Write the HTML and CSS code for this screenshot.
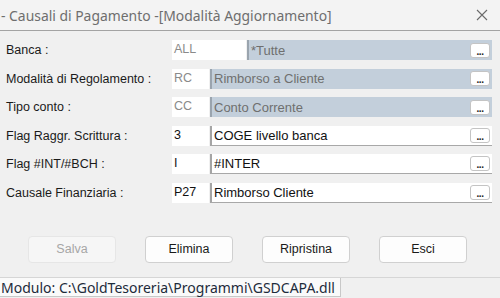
FILE: index.html
```html
<!DOCTYPE html>
<html lang="it">
<head>
  <meta charset="UTF-8" />
  <title>Causali di Pagamento</title>
  <link rel="stylesheet" href="styles.css">
</head>
<body>
  <div class="window">
    <div class="titlebar">
      <span class="title">- Causali di Pagamento -[Modalità Aggiornamento]</span>
      <svg class="close" width="12" height="12" viewBox="0 0 12 12">
        <path d="M1 1 L11 11 M11 1 L1 11" stroke="#6a6a6a" stroke-width="1.1" fill="none"/>
      </svg>
    </div>

    <div class="form">
      <div class="row">
        <label>Banca :</label>
        <div class="code wide off">ALL</div>
        <div class="desc off">*Tutte<span class="dots">...</span></div>
      </div>
      <div class="row">
        <label>Modalità di Regolamento :</label>
        <div class="code off">RC</div>
        <div class="desc off">Rimborso a Cliente<span class="dots">...</span></div>
      </div>
      <div class="row">
        <label>Tipo conto :</label>
        <div class="code off">CC</div>
        <div class="desc off">Conto Corrente<span class="dots">...</span></div>
      </div>
      <div class="row">
        <label>Flag Raggr. Scrittura :</label>
        <div class="code">3</div>
        <div class="desc">COGE livello banca<span class="dots">...</span></div>
      </div>
      <div class="row">
        <label>Flag #INT/#BCH :</label>
        <div class="code">I</div>
        <div class="desc">#INTER<span class="dots">...</span></div>
      </div>
      <div class="row">
        <label>Causale Finanziaria :</label>
        <div class="code">P27</div>
        <div class="desc">Rimborso Cliente<span class="dots">...</span></div>
      </div>
    </div>

    <div class="buttons">
      <button class="btn" disabled>Salva</button>
      <button class="btn">Elimina</button>
      <button class="btn">Ripristina</button>
      <button class="btn">Esci</button>
    </div>

    <div class="status">
      <div class="panel">Modulo: C:\GoldTesoreria\Programmi\GSDCAPA.dll</div>
    </div>
  </div>
</body>
</html>
```

FILE: styles.css
```css
body {
  margin: 0;
  background: #f0f0f0;
}

.window {
  width: 500px;
  height: 298px;
  display: flex;
  flex-direction: column;
  background: #f0f0f0;
  overflow: hidden;
}

.titlebar {
  height: 30px;
  flex: none;
  display: flex;
  align-items: center;
  justify-content: space-between;
  padding: 0 12px 0 1px;
  background: #f3f3f3;
  border-bottom: 1px solid #a3a3a3;
}

.title {
  font-family: "Noto Sans", sans-serif;
  font-size: 13.9px;
  color: #6e6e6e;
}

.form {
  display: flex;
  flex-direction: column;
  gap: 8.6px;
  padding: 9px 0 0 0;
}

.row {
  height: 20px;
  display: flex;
  align-items: stretch;
  font-family: "Liberation Sans", Arial, sans-serif;
  font-size: 12.5px;
}

.row label {
  width: 166px;
  padding-left: 6px;
  line-height: 20px;
  color: #1a1a1a;
}

.code {
  width: 35px;
  padding-left: 2px;
  background: #fff;
  color: #111;
  line-height: 18px;
}

.code.wide {
  width: 72px;
}

.code.off {
  color: #8a8a8a;
}

.desc {
  flex: 1;
  margin: 0 8px 0 1px;
  display: flex;
  align-items: center;
  padding-left: 2px;
  background: #fff;
  border-left: 2px solid #a5a5a5;
  border-bottom: 1px solid #a8a8a8;
  color: #111;
  font-size: 13px;
}

.desc.off {
  background: #c3cfdb;
  border-bottom: none;
  border-left-color: #9aa4ae;
  color: #6f6f6f;
}

.dots {
  margin-left: auto;
  margin-right: 2px;
  width: 20px;
  height: 15px;
  box-sizing: border-box;
  background: #fff;
  border: 1px solid #c4c4c4;
  border-radius: 3px;
  font-size: 10px;
  font-weight: bold;
  line-height: 16px;
  text-align: center;
  color: #222;
  letter-spacing: -0.5px;
}

.buttons {
  display: flex;
  gap: 29px;
  padding: 33px 0 0 28px;
}

.btn {
  width: 88px;
  height: 27px;
  background: #fdfdfd;
  border: 1px solid #d0d0d0;
  border-radius: 4px;
  font-family: "Liberation Sans", Arial, sans-serif;
  font-size: 12.5px;
  color: #1a1a1a;
}

.btn:disabled {
  background: #f6f6f6;
  border-color: #e6e6e6;
  color: #a6a6a6;
}

.status {
  margin-top: auto;
  height: 20px;
  border-top: 1px solid #d6d6d6;
  background: #f0f0f0;
}

.panel {
  width: 339px;
  height: 18px;
  background: #fafafa;
  border-right: 1px solid #c8c8c8;
  border-bottom: 1px solid #c8c8c8;
  font-family: "Noto Sans", sans-serif;
  font-size: 14px;
  line-height: 19px;
  color: #1d2b3a;
  padding-left: 1px;
  white-space: nowrap;
}
```
